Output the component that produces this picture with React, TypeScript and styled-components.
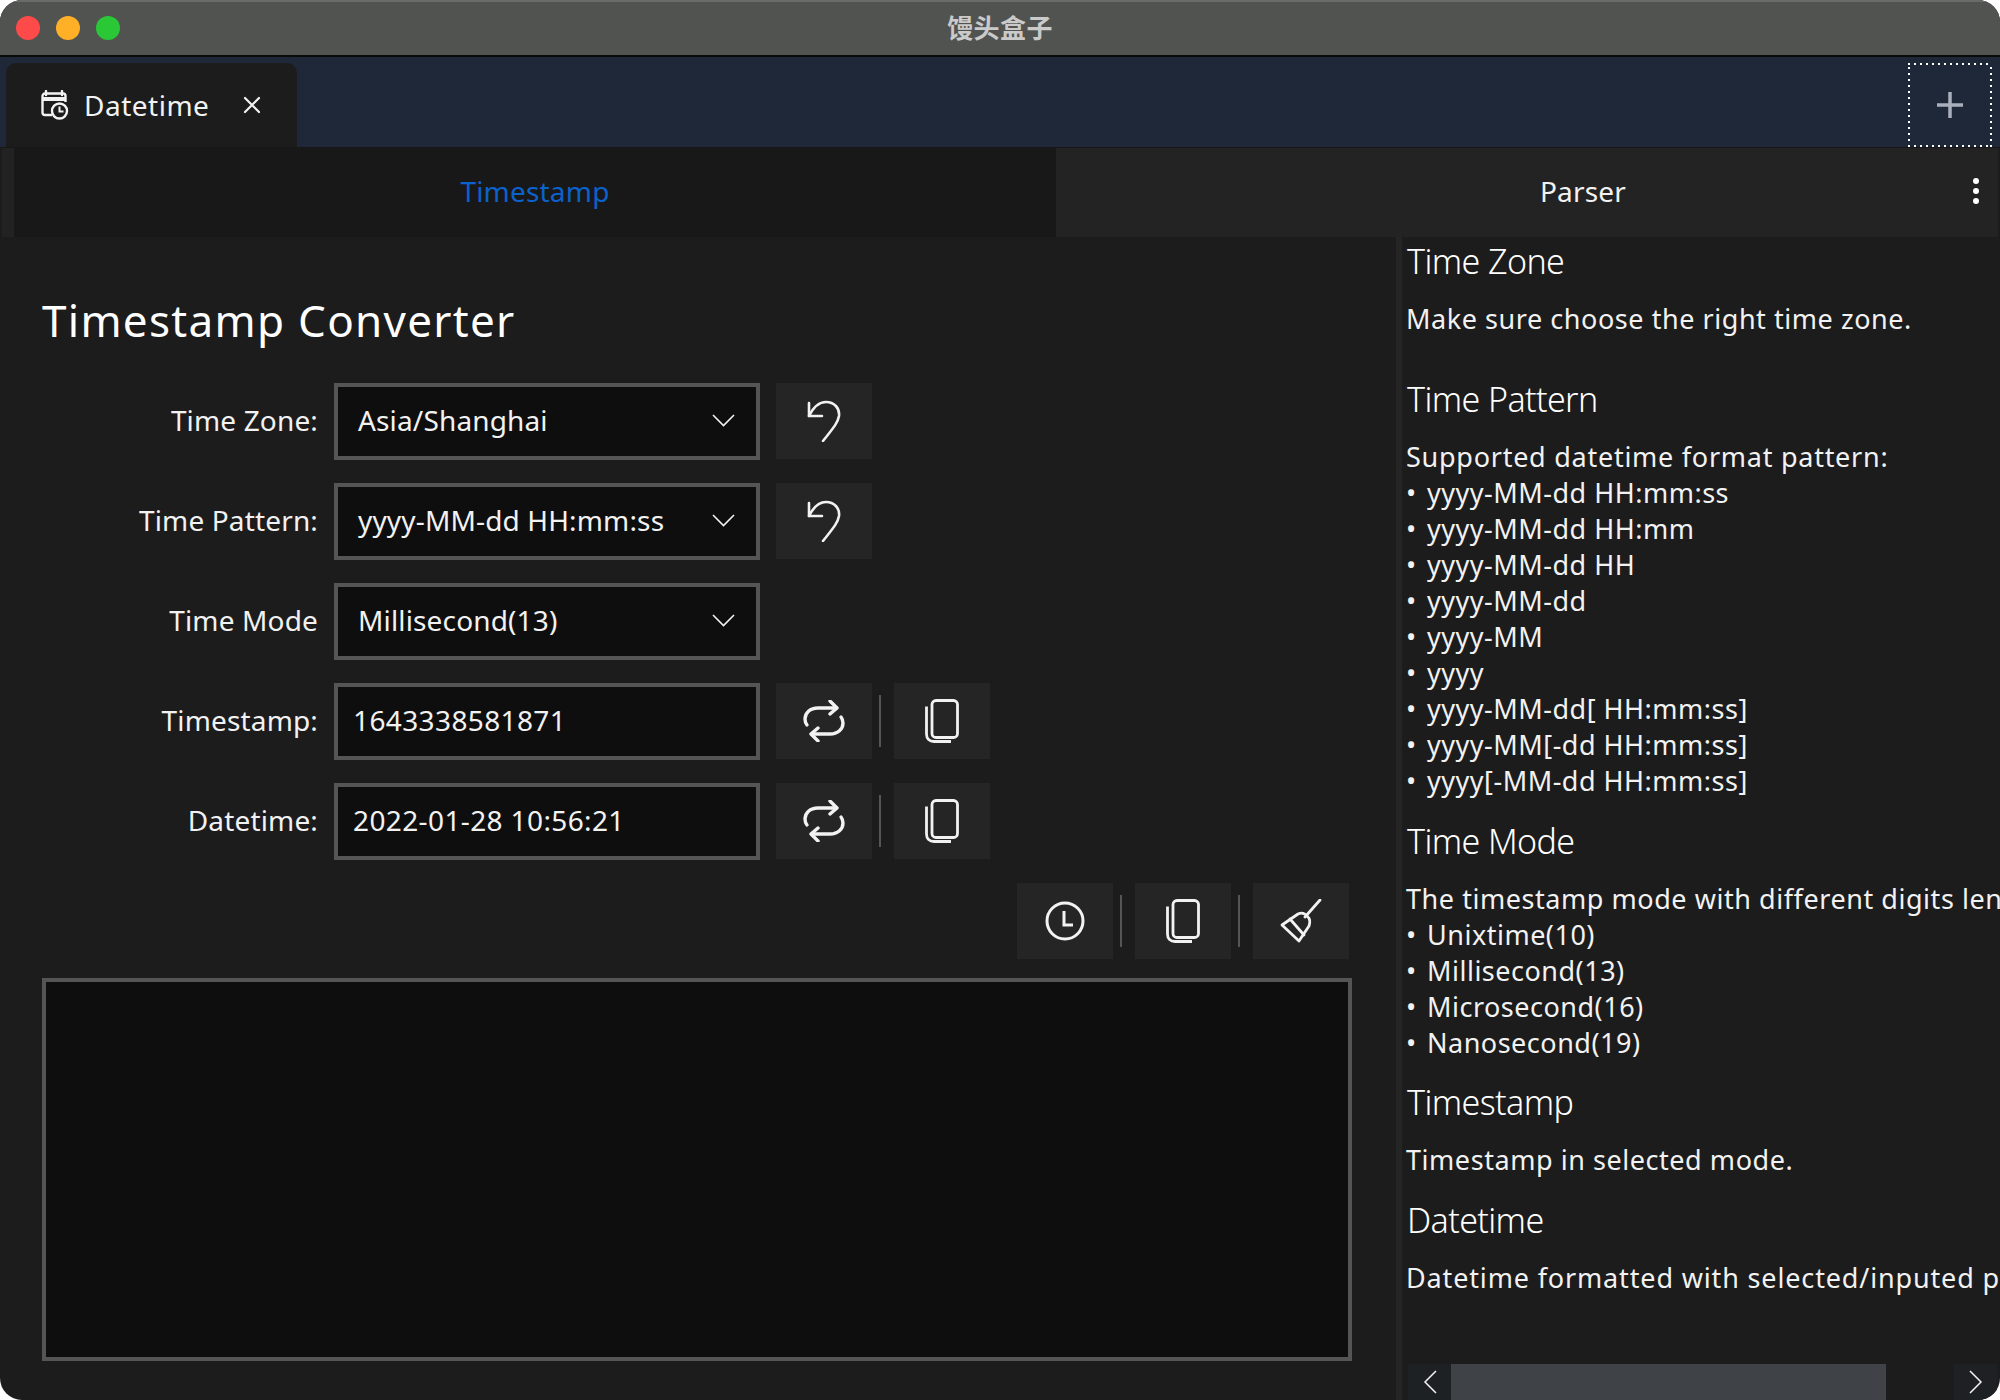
import React from "react";
import styled, { createGlobalStyle } from "styled-components";

const GlobalStyle = createGlobalStyle`
  html, body {
    margin: 0;
    padding: 0;
    background: #ffffff;
  }
`;

const Window = styled.div`
  width: 2000px;
  height: 1400px;
  display: flex;
  flex-direction: column;
  overflow: hidden;
  border-radius: 22px;
  background: #1c1c1c;
  color: #f2f2f2;
  font-family: "Noto Sans", "Noto Sans CJK SC", sans-serif;
`;

const TitleBar = styled.div`
  height: 57px;
  flex: none;
  box-sizing: border-box;
  display: flex;
  align-items: center;
  justify-content: center;
  position: relative;
  padding-bottom: 5px;
  background: #515351;
  border-top: 2px solid #6a6c6a;
  border-bottom: 2px solid #0a0a0a;
`;

const Lights = styled.div`
  position: absolute;
  left: 16px;
  top: 14px;
  display: flex;
  gap: 16px;
`;

const Light = styled.span<{ $color: string }>`
  width: 24px;
  height: 24px;
  border-radius: 50%;
  background: ${(p) => p.$color};
`;

const WindowTitle = styled.div`
  font-family: "Noto Sans CJK SC", sans-serif;
  font-size: 26px;
  font-weight: 700;
  letter-spacing: 0.4px;
  color: #c9cac9;
`;

const TabBar = styled.div`
  height: 90px;
  flex: none;
  box-sizing: border-box;
  display: flex;
  justify-content: space-between;
  padding: 6px 8px 0 6px;
  background: #1f2838;
`;

const Tab = styled.div`
  width: 291px;
  box-sizing: border-box;
  display: flex;
  align-items: center;
  padding: 0 0 0 35px;
  border-radius: 10px 10px 0 0;
  background: #1c1c1c;
  font-size: 28px;
`;

const TabLabel = styled.span`
  margin: 0 34px 0 15px;
  letter-spacing: 0.5px;
`;

const AddTab = styled.div`
  width: 84px;
  height: 84px;
  display: flex;
  align-items: center;
  justify-content: center;
  color: #a9b0bb;
  background-image: repeating-linear-gradient(90deg, #ffffff 0 2px, transparent 2px 6px),
    repeating-linear-gradient(90deg, #ffffff 0 2px, transparent 2px 6px),
    repeating-linear-gradient(0deg, #ffffff 0 2px, transparent 2px 6px),
    repeating-linear-gradient(0deg, #ffffff 0 2px, transparent 2px 6px);
  background-size: 100% 2px, 100% 2px, 2px 100%, 2px 100%;
  background-position: top, bottom, left, right;
  background-repeat: no-repeat;
`;

const ViewTabs = styled.div`
  height: 90px;
  flex: none;
  box-sizing: border-box;
  display: flex;
  padding: 0 2px;
  border-top: 1px solid #171717;
  background: #1c1c1c;
  font-size: 28px;
`;

const TabEdge = styled.div`
  width: 12px;
  background: #222222;
`;

const ViewTab = styled.div<{ $active?: boolean; $width: number; $shift?: number }>`
  width: ${(p) => p.$width}px;
  box-sizing: border-box;
  display: flex;
  align-items: center;
  justify-content: center;
  position: relative;
  padding: 0 0 4px ${(p) => p.$shift ?? 0}px;
  letter-spacing: 0.2px;
  color: ${(p) => (p.$active ? "#0b62cc" : "#f2f2f2")};
  background: ${(p) => (p.$active ? "#181818" : "#232323")};
`;

const MoreDots = styled.div`
  position: absolute;
  right: 19px;
  top: 30px;
  display: flex;
  flex-direction: column;
  gap: 4px;
`;

const Dot = styled.span`
  width: 6px;
  height: 6px;
  border-radius: 50%;
  background: #ffffff;
`;

const Body = styled.div`
  flex: 1;
  min-height: 0;
  display: flex;
`;

const Converter = styled.div`
  width: 1396px;
  flex: none;
  box-sizing: border-box;
  padding: 54px 44px 0 42px;
  display: flex;
  flex-direction: column;
`;

const Heading = styled.h1`
  margin: 0 0 34px;
  font-size: 44px;
  line-height: 58px;
  font-weight: 400;
  letter-spacing: 1.3px;
  color: #ffffff;
`;

const Form = styled.div`
  display: flex;
  flex-direction: column;
  gap: 23px;
`;

const Row = styled.div`
  display: flex;
  align-items: flex-start;
  height: 77px;
`;

const Label = styled.div`
  width: 276px;
  height: 74px;
  display: flex;
  align-items: center;
  justify-content: flex-end;
  margin-right: 16px;
  font-size: 28px;
  letter-spacing: 0.15px;
`;

const Select = styled.div`
  width: 426px;
  height: 77px;
  box-sizing: border-box;
  display: flex;
  align-items: center;
  justify-content: space-between;
  padding: 0 21px 3px 20px;
  border: 4px solid #555555;
  background: #0e0e0e;
  font-size: 28px;
  letter-spacing: 0.15px;
`;

const Input = styled(Select)`
  padding: 0 15px 3px;
  letter-spacing: 0.38px;
`;

const IconButton = styled.div`
  width: 96px;
  height: 76px;
  flex: none;
  display: flex;
  align-items: center;
  justify-content: center;
  background: #252525;
  color: #f2f2f2;
`;

const Buttons = styled.div`
  display: flex;
  align-items: center;
  margin-left: 16px;
`;

const Separator = styled.span`
  width: 2px;
  height: 52px;
  margin: 0 13px 0 7px;
  background: #555555;
`;

const ActionBar = styled.div`
  display: flex;
  justify-content: flex-end;
  align-items: center;
  margin: 23px 3px 19px 0;
`;

const Output = styled.div`
  height: 383px;
  box-sizing: border-box;
  border: 4px solid #555555;
  background: #0e0e0e;
`;

const Divider = styled.div`
  width: 6px;
  flex: none;
  background: #252525;
`;

const Help = styled.div`
  flex: 1;
  min-width: 0;
  display: flex;
  flex-direction: column;
`;

const HelpScroll = styled.div`
  flex: 1;
  min-height: 0;
  overflow: hidden;
  padding: 2px 0 0 4px;
  white-space: nowrap;
`;

const HelpTitle = styled.div<{ $gap: number }>`
  margin: ${(p) => p.$gap}px 0 18px 1px;
  font-size: 34px;
  line-height: 44px;
  font-weight: 300;
  letter-spacing: -0.6px;
  color: #ffffff;
`;

const HelpLine = styled.div<{ $spacing?: number }>`
  font-size: 27px;
  line-height: 36px;
  letter-spacing: ${(p) => p.$spacing ?? 0.5}px;
`;

const Bullet = styled.span`
  display: inline-block;
  width: 21px;
`;

const ScrollBar = styled.div`
  height: 36px;
  flex: none;
  display: flex;
  justify-content: space-between;
  margin: 0 3px 0 6px;
  background: #1c1c1c;
`;

const ScrollButton = styled.div`
  width: 43px;
  display: flex;
  align-items: center;
  justify-content: center;
  background: #1e2124;
  color: #f2f2f2;
`;

const ScrollTrack = styled.div`
  flex: 1;
  padding-right: 68px;
  display: flex;
`;

const ScrollThumb = styled.div`
  flex: 1;
  background: #3f4246;
`;

const CalendarIcon = () => (
  <svg width="28" height="30" viewBox="0 0 28 30" fill="none" stroke="currentColor" strokeWidth="2.4">
    <path d="M5 1v4M21 1v4" strokeLinecap="round" />
    <path d="M11 25H4a2.5 2.5 0 0 1-2.500-2.500V6A2.500 2.500 0 0 1 4 3.500h18A2.500 2.500 0 0 1 24.500 6v6" />
    <path d="M2 9h22" strokeWidth="4" />
    <circle cx="18.500" cy="21" r="7.500" />
    <path d="M18.500 16.500V21.500h4" strokeWidth="2" />
  </svg>
);

const CloseIcon = () => (
  <svg width="18" height="18" viewBox="0 0 18 18" stroke="currentColor" strokeWidth="2.2" strokeLinecap="round">
    <path d="M2 2l14 14M16 2L2 16" />
  </svg>
);

const PlusIcon = () => (
  <svg width="26" height="26" viewBox="0 0 26 26" stroke="currentColor" strokeWidth="3.5">
    <path d="M13 0v26M0 13h26" />
  </svg>
);

const ChevronIcon = () => (
  <svg width="23" height="14" viewBox="0 0 23 14" fill="none" stroke="currentColor" strokeWidth="1.6">
    <path d="M1 2l10.500 10.500L22 2" />
  </svg>
);

const UndoIcon = () => (
  <svg width="36" height="42" viewBox="0 0 36 42" fill="none" stroke="currentColor" strokeWidth="2.6" strokeLinecap="round" strokeLinejoin="round">
    <path d="M3 3v13h13" />
    <path d="M3 16C8 6 13 2 20 2c8 0 14 6 13 14-1 6-4 10-16 25" />
  </svg>
);

const SwapIcon = () => (
  <svg width="42" height="42" viewBox="0 0 42 42" fill="none" stroke="currentColor" strokeWidth="3.4" strokeLinecap="round" strokeLinejoin="round">
    <path d="M27 1l7 7-7 6" />
    <path d="M33 8H15C7 8 2 13 2 19c0 2 .5 4 2 6" />
    <path d="M15 41l-7-7 7-6" />
    <path d="M9 34h18c8 0 13-5 13-11 0-2-.5-4-2-6" />
  </svg>
);

const CopyIcon = () => (
  <svg width="34" height="44" viewBox="0 0 34 44" fill="none" stroke="currentColor" strokeWidth="2.800">
    <rect x="7" y="1.500" width="25.500" height="37" rx="4" />
    <path d="M1.500 7.500V35c0 4.500 3 7.500 7.500 7.500h17" />
  </svg>
);

const ClockIcon = () => (
  <svg width="40" height="40" viewBox="0 0 40 40" fill="none" stroke="currentColor" strokeWidth="3">
    <circle cx="20" cy="20" r="18" />
    <path d="M19 10v14h9" />
  </svg>
);

const BroomIcon = () => (
  <svg width="42" height="44" viewBox="0 0 42 44" fill="none" stroke="currentColor" strokeWidth="2.800" strokeLinejoin="round" strokeLinecap="round">
    <path d="M40 1L25 18" />
    <path d="M2 26l16-11c4-2 7-1 10 3 3 3 2 6 1 9L19 42z" />
    <path d="M10 20l14 16" />
  </svg>
);

const ArrowLeft = () => (
  <svg width="14" height="24" viewBox="0 0 14 24" fill="none" stroke="currentColor" strokeWidth="1.5">
    <path d="M13 1L2 12l11 11" />
  </svg>
);

const ArrowRight = () => (
  <svg width="14" height="24" viewBox="0 0 14 24" fill="none" stroke="currentColor" strokeWidth="1.5">
    <path d="M1 1l11 11L1 23" />
  </svg>
);

const patterns = [
  "yyyy-MM-dd HH:mm:ss",
  "yyyy-MM-dd HH:mm",
  "yyyy-MM-dd HH",
  "yyyy-MM-dd",
  "yyyy-MM",
  "yyyy",
  "yyyy-MM-dd[ HH:mm:ss]",
  "yyyy-MM[-dd HH:mm:ss]",
  "yyyy[-MM-dd HH:mm:ss]",
];

const modes = ["Unixtime(10)", "Millisecond(13)", "Microsecond(16)", "Nanosecond(19)"];

const SelectRow = ({ label, value, resettable }: { label: string; value: string; resettable?: boolean }) => (
  <Row>
    <Label>{label}</Label>
    <Select>
      {value}
      <ChevronIcon />
    </Select>
    {resettable && (
      <Buttons>
        <IconButton>
          <UndoIcon />
        </IconButton>
      </Buttons>
    )}
  </Row>
);

const InputRow = ({ label, value }: { label: string; value: string }) => (
  <Row>
    <Label>{label}</Label>
    <Input>{value}</Input>
    <Buttons>
      <IconButton>
        <SwapIcon />
      </IconButton>
      <Separator />
      <IconButton>
        <CopyIcon />
      </IconButton>
    </Buttons>
  </Row>
);

export default function App() {
  return (
    <Window>
      <GlobalStyle />
      <TitleBar>
        <Lights>
          <Light $color="#ff4a4a" />
          <Light $color="#ffb027" />
          <Light $color="#2ac837" />
        </Lights>
        <WindowTitle>馒头盒子</WindowTitle>
      </TitleBar>
      <TabBar>
        <Tab>
          <CalendarIcon />
          <TabLabel>Datetime</TabLabel>
          <CloseIcon />
        </Tab>
        <AddTab>
          <PlusIcon />
        </AddTab>
      </TabBar>
      <ViewTabs>
        <TabEdge />
        <ViewTab $active $width={1042}>
          Timestamp
        </ViewTab>
        <ViewTab $width={942} $shift={112}>
          Parser
          <MoreDots>
            <Dot />
            <Dot />
            <Dot />
          </MoreDots>
        </ViewTab>
      </ViewTabs>
      <Body>
        <Converter>
          <Heading>Timestamp Converter</Heading>
          <Form>
            <SelectRow label="Time Zone:" value="Asia/Shanghai" resettable />
            <SelectRow label="Time Pattern:" value="yyyy-MM-dd HH:mm:ss" resettable />
            <SelectRow label="Time Mode" value="Millisecond(13)" />
            <InputRow label="Timestamp:" value="1643338581871" />
            <InputRow label="Datetime:" value="2022-01-28 10:56:21" />
          </Form>
          <ActionBar>
            <IconButton>
              <ClockIcon />
            </IconButton>
            <Separator />
            <IconButton>
              <CopyIcon />
            </IconButton>
            <Separator />
            <IconButton>
              <BroomIcon />
            </IconButton>
          </ActionBar>
          <Output />
        </Converter>
        <Divider />
        <Help>
          <HelpScroll>
            <HelpTitle $gap={0}>Time Zone</HelpTitle>
            <HelpLine $spacing={0.55}>Make sure choose the right time zone.</HelpLine>
            <HelpTitle $gap={40}>Time Pattern</HelpTitle>
            <HelpLine $spacing={0.74}>Supported datetime format pattern:</HelpLine>
            {patterns.map((p) => (
              <HelpLine key={p}>
                <Bullet>•</Bullet>
                {p}
              </HelpLine>
            ))}
            <HelpTitle $gap={20}>Time Mode</HelpTitle>
            <HelpLine $spacing={0.55}>The timestamp mode with different digits length:</HelpLine>
            {modes.map((m) => (
              <HelpLine key={m}>
                <Bullet>•</Bullet>
                {m}
              </HelpLine>
            ))}
            <HelpTitle $gap={19}>Timestamp</HelpTitle>
            <HelpLine $spacing={0.55}>Timestamp in selected mode.</HelpLine>
            <HelpTitle $gap={20}>Datetime</HelpTitle>
            <HelpLine $spacing={0.85}>Datetime formatted with selected/inputed pattern.</HelpLine>
          </HelpScroll>
          <ScrollBar>
            <ScrollButton>
              <ArrowLeft />
            </ScrollButton>
            <ScrollTrack>
              <ScrollThumb />
            </ScrollTrack>
            <ScrollButton>
              <ArrowRight />
            </ScrollButton>
          </ScrollBar>
        </Help>
      </Body>
    </Window>
  );
}
